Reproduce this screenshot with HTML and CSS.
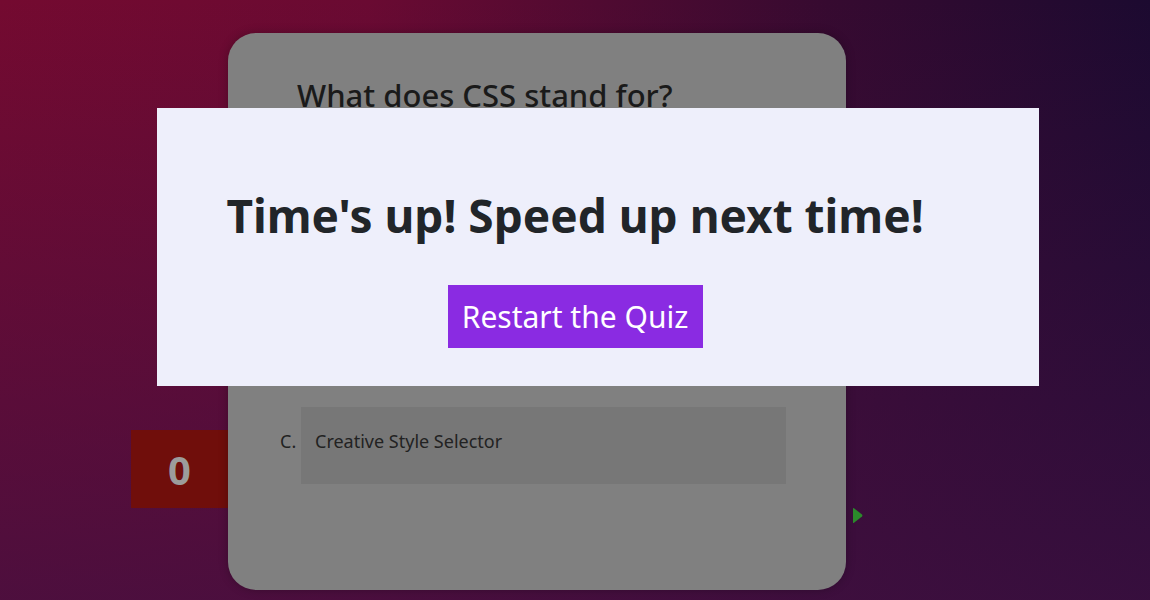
FILE: index.html
```html
<!DOCTYPE html>
<html lang="en">
<head>
<meta charset="utf-8">
<title>Quiz</title>
<link rel="stylesheet" href="styles.css">
</head>
<body>
<div class="stage">
  <div class="score">0</div>
  <div class="card">
    <h2 class="question">What does CSS stand for?</h2>
    <ul class="options">
      <li class="option"><span class="letter">C.</span><span class="choice">Creative Style Selector</span></li>
    </ul>
  </div>
  <div class="next">
    <svg width="11" height="17" viewBox="0 0 11 17"><path d="M1 1.5 Q1 0.5 2 1.2 L10 7.6 Q10.8 8.5 10 9.4 L2 15.8 Q1 16.5 1 15.5 Z" fill="#2b8a2b"/></svg>
  </div>
</div>
<div class="modal">
  <h1 class="modal-title">Time's up! Speed up next time!</h1>
  <button class="restart">Restart the Quiz</button>
</div>
</body>
</html>
```
FILE: styles.css
```css
html, body {
  margin: 0;
  padding: 0;
}
body {
  width: 1150px;
  height: 600px;
  overflow: hidden;
  position: relative;
  font-family: "Noto Sans", "Open Sans", sans-serif;
  background:
    linear-gradient(to bottom, rgba(64, 16, 66, 0) 0%, rgba(64, 16, 66, 0.75) 100%),
    linear-gradient(90deg, #740a30 0%, #6a0a32 32%, #360a30 72%, #1c0a30 100%);
}
.stage {
  display: flex;
  align-items: flex-start;
  padding: 33px 0 0 131px;
}
.score {
  margin-top: 397px;
  width: 97px;
  height: 78px;
  background: #700e0b;
  color: #9c9c9c;
  font-weight: 700;
  font-size: 40px;
  display: flex;
  align-items: center;
  justify-content: center;
}
.card {
  width: 618px;
  height: 557px;
  box-sizing: border-box;
  background: #808080;
  border-radius: 28px;
  box-shadow: 0 0 10px rgba(0, 0, 0, 0.25);
  padding: 42px 60px 0 52px;
}
.question {
  margin: 0 0 0 17px;
  font-size: 31px;
  font-weight: 500;
  color: #1a1a1a;
  line-height: 40px;
}
.options {
  list-style: none;
  margin: 292px 0 0;
  padding: 0;
  display: flex;
  flex-direction: column;
  gap: 24px;
}
.option {
  display: flex;
  align-items: flex-start;
  font-size: 18px;
  color: #222;
}
.letter {
  width: 21px;
  padding-top: 22px;
  line-height: 25px;
}
.choice {
  flex: 1;
  height: 77px;
  box-sizing: border-box;
  background: #777777;
  padding: 22px 14px;
  line-height: 25px;
}
.next {
  margin: 474px 0 0 6px;
  line-height: 0;
}
.modal {
  position: absolute;
  left: 157px;
  top: 108px;
  width: 882px;
  height: 278px;
  box-sizing: border-box;
  padding: 77px 46px 0 0;
  background: #eeeffb;
  display: flex;
  flex-direction: column;
  align-items: center;
}
.modal-title {
  margin: 0;
  font-size: 46px;
  font-weight: 700;
  color: #212529;
  line-height: 60px;
}
.restart {
  margin-top: 40px;
  width: 255px;
  height: 63px;
  border: none;
  background: #8a2be2;
  color: #fff;
  font-family: inherit;
  font-size: 30px;
  padding: 0;
}
```
